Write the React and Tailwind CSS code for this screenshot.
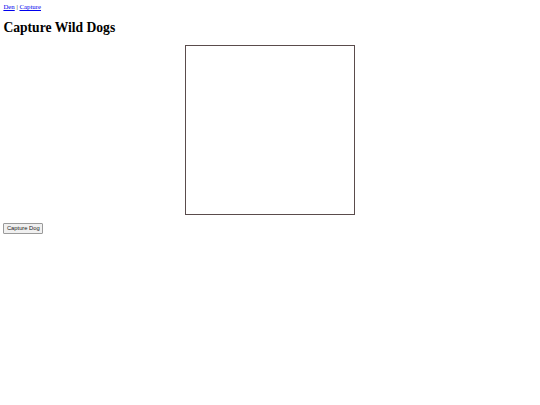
export default function App() {
  return (
    <div className="min-h-screen bg-white px-[3.4px] pt-[3.4px] text-black" style={{ fontFamily: '"Liberation Serif", serif' }}>
      <nav className="text-[6.8px] leading-[7.8px]">
        <a href="#den" className="text-[#0000ee] underline">Den</a>
        <span> | </span>
        <a href="#capture" className="text-[#0000ee] underline">Capture</a>
      </nav>
      <h1 className="my-[9.1px] text-[13.6px] font-bold leading-[15.6px]">Capture Wild Dogs</h1>
      <div className="mx-auto h-[170px] w-[170px] border border-[#5a4c4c]" />
      <div className="mt-[8px] flex">
        <button
          className="rounded-[1px] border border-[#9a9a9a] bg-[#f0f0f0] px-[2.5px] py-[1.5px] text-[5.8px] leading-[6.5px] text-[#222]"
          style={{ fontFamily: '"Liberation Sans", Arial, sans-serif' }}
        >
          Capture Dog
        </button>
      </div>
    </div>
  );
}
